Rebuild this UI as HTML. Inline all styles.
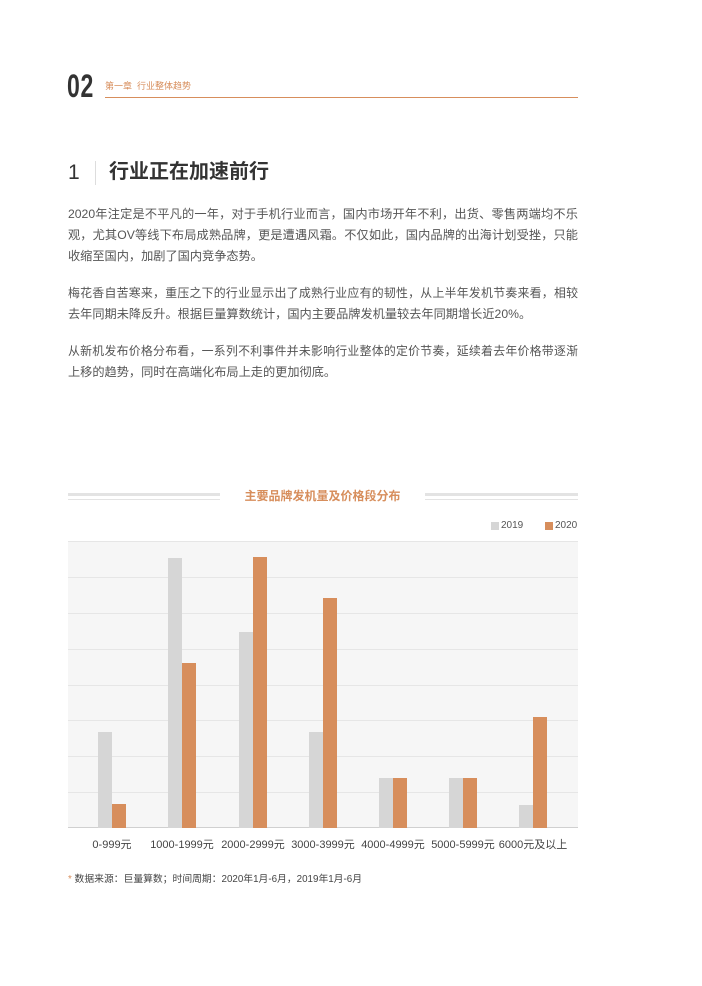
<!DOCTYPE html>
<html><head><meta charset="utf-8"><style>
body{margin:0;background:#fff;}
.p{position:relative;width:702px;height:986px;font-family:"Liberation Sans","Noto Sans CJK SC",sans-serif;}
.a{position:absolute;}
.ln{position:absolute;left:68px;width:510px;font-size:12.2px;color:#555;text-align:justify;text-align-last:justify;line-height:16px;height:16px;overflow:visible;}
.ln.l{text-align-last:left;}
.ln.t{font-size:11.9px;}
.grid{position:absolute;left:68px;width:510px;height:1px;background:#e6e6e6;}
.b{position:absolute;width:14px;}
.g{background:#d6d6d6}.o{background:#d78e5c}
.xl{position:absolute;top:836px;font-size:11px;color:#444;width:90px;text-align:center;}
</style></head><body><div class="p">
<div class="a" style="left:67px;top:68px;font-size:32px;font-weight:bold;color:#333;transform:scaleX(0.72);transform-origin:left top;letter-spacing:1px;line-height:36px">02</div>
<div class="a" style="left:105px;top:80px;font-size:9px;color:#d78e5c;line-height:12px">第一章&nbsp;&nbsp;行业整体趋势</div>
<div class="a" style="left:105px;top:97px;width:473px;height:1px;background:#d78e5c"></div>
<div class="a" style="left:68px;top:160px;font-size:21px;color:#333;line-height:26px">1</div>
<div class="a" style="left:95px;top:161px;width:1px;height:24px;background:#ddd"></div>
<div class="a" style="left:109px;top:159px;font-size:20px;font-weight:bold;color:#333;line-height:26px">行业正在加速前行</div>
<div class="ln" style="top:206px">2020年注定是不平凡的一年，对于手机行业而言，国内市场开年不利，出货、零售两端均不乐</div>
<div class="ln" style="top:227px">观，尤其OV等线下布局成熟品牌，更是遭遇风霜。不仅如此，国内品牌的出海计划受挫，只能</div>
<div class="ln l" style="top:248px">收缩至国内，加剧了国内竞争态势。</div>
<div class="ln t" style="top:285px">梅花香自苦寒来，重压之下的行业显示出了成熟行业应有的韧性，从上半年发机节奏来看，相较</div>
<div class="ln l" style="top:306px">去年同期未降反升。根据巨量算数统计，国内主要品牌发机量较去年同期增长近20%。</div>
<div class="ln t" style="top:343px">从新机发布价格分布看，一系列不利事件并未影响行业整体的定价节奏，延续着去年价格带逐渐</div>
<div class="ln l" style="top:364px">上移的趋势，同时在高端化布局上走的更加彻底。</div>
<div class="a" style="left:68px;top:493px;width:152px;height:3px;background:#e3e3e3"></div>
<div class="a" style="left:68px;top:499px;width:152px;height:1px;background:#e3e3e3"></div>
<div class="a" style="left:425px;top:493px;width:153px;height:3px;background:#e3e3e3"></div>
<div class="a" style="left:425px;top:499px;width:153px;height:1px;background:#e3e3e3"></div>
<div class="a" style="left:220px;top:488px;width:205px;text-align:center;font-size:12px;font-weight:bold;color:#d78e5c;line-height:16px">主要品牌发机量及价格段分布</div>
<div class="a" style="left:491px;top:522px;width:8px;height:8px;background:#d6d6d6"></div>
<div class="a" style="left:501px;top:519px;font-size:10px;color:#555;line-height:14px">2019</div>
<div class="a" style="left:545px;top:522px;width:8px;height:8px;background:#d78e5c"></div>
<div class="a" style="left:555px;top:519px;font-size:10px;color:#555;line-height:14px">2020</div>
<div class="a" style="left:68px;top:541px;width:510px;height:287px;background:#f6f6f6"></div>
<div class="grid" style="top:541px"></div><div class="grid" style="top:577px"></div><div class="grid" style="top:613px"></div><div class="grid" style="top:649px"></div><div class="grid" style="top:685px"></div><div class="grid" style="top:720px"></div><div class="grid" style="top:756px"></div><div class="grid" style="top:792px"></div>
<div class="a" style="left:68px;top:827px;width:510px;height:1px;background:#d0d0d0"></div>
<div class="b g" style="left:98px;top:732px;height:96px"></div><div class="b o" style="left:112px;top:804px;height:24px"></div>
<div class="b g" style="left:168px;top:558px;height:270px"></div><div class="b o" style="left:182px;top:663px;height:165px"></div>
<div class="b g" style="left:239px;top:632px;height:196px"></div><div class="b o" style="left:253px;top:557px;height:271px"></div>
<div class="b g" style="left:309px;top:732px;height:96px"></div><div class="b o" style="left:323px;top:598px;height:230px"></div>
<div class="b g" style="left:379px;top:778px;height:50px"></div><div class="b o" style="left:393px;top:778px;height:50px"></div>
<div class="b g" style="left:449px;top:778px;height:50px"></div><div class="b o" style="left:463px;top:778px;height:50px"></div>
<div class="b g" style="left:519px;top:805px;height:23px"></div><div class="b o" style="left:533px;top:717px;height:111px"></div>
<div class="xl" style="left:67px">0-999元</div>
<div class="xl" style="left:137px">1000-1999元</div>
<div class="xl" style="left:208px">2000-2999元</div>
<div class="xl" style="left:278px">3000-3999元</div>
<div class="xl" style="left:348px">4000-4999元</div>
<div class="xl" style="left:418px">5000-5999元</div>
<div class="xl" style="left:488px">6000元及以上</div>
<div class="a" style="left:68px;top:874px;font-size:9.8px;color:#444;line-height:12px"><span style="color:#d78e5c">*</span> 数据来源：巨量算数；时间周期：2020年1月-6月，2019年1月-6月</div>
</div></body></html>
